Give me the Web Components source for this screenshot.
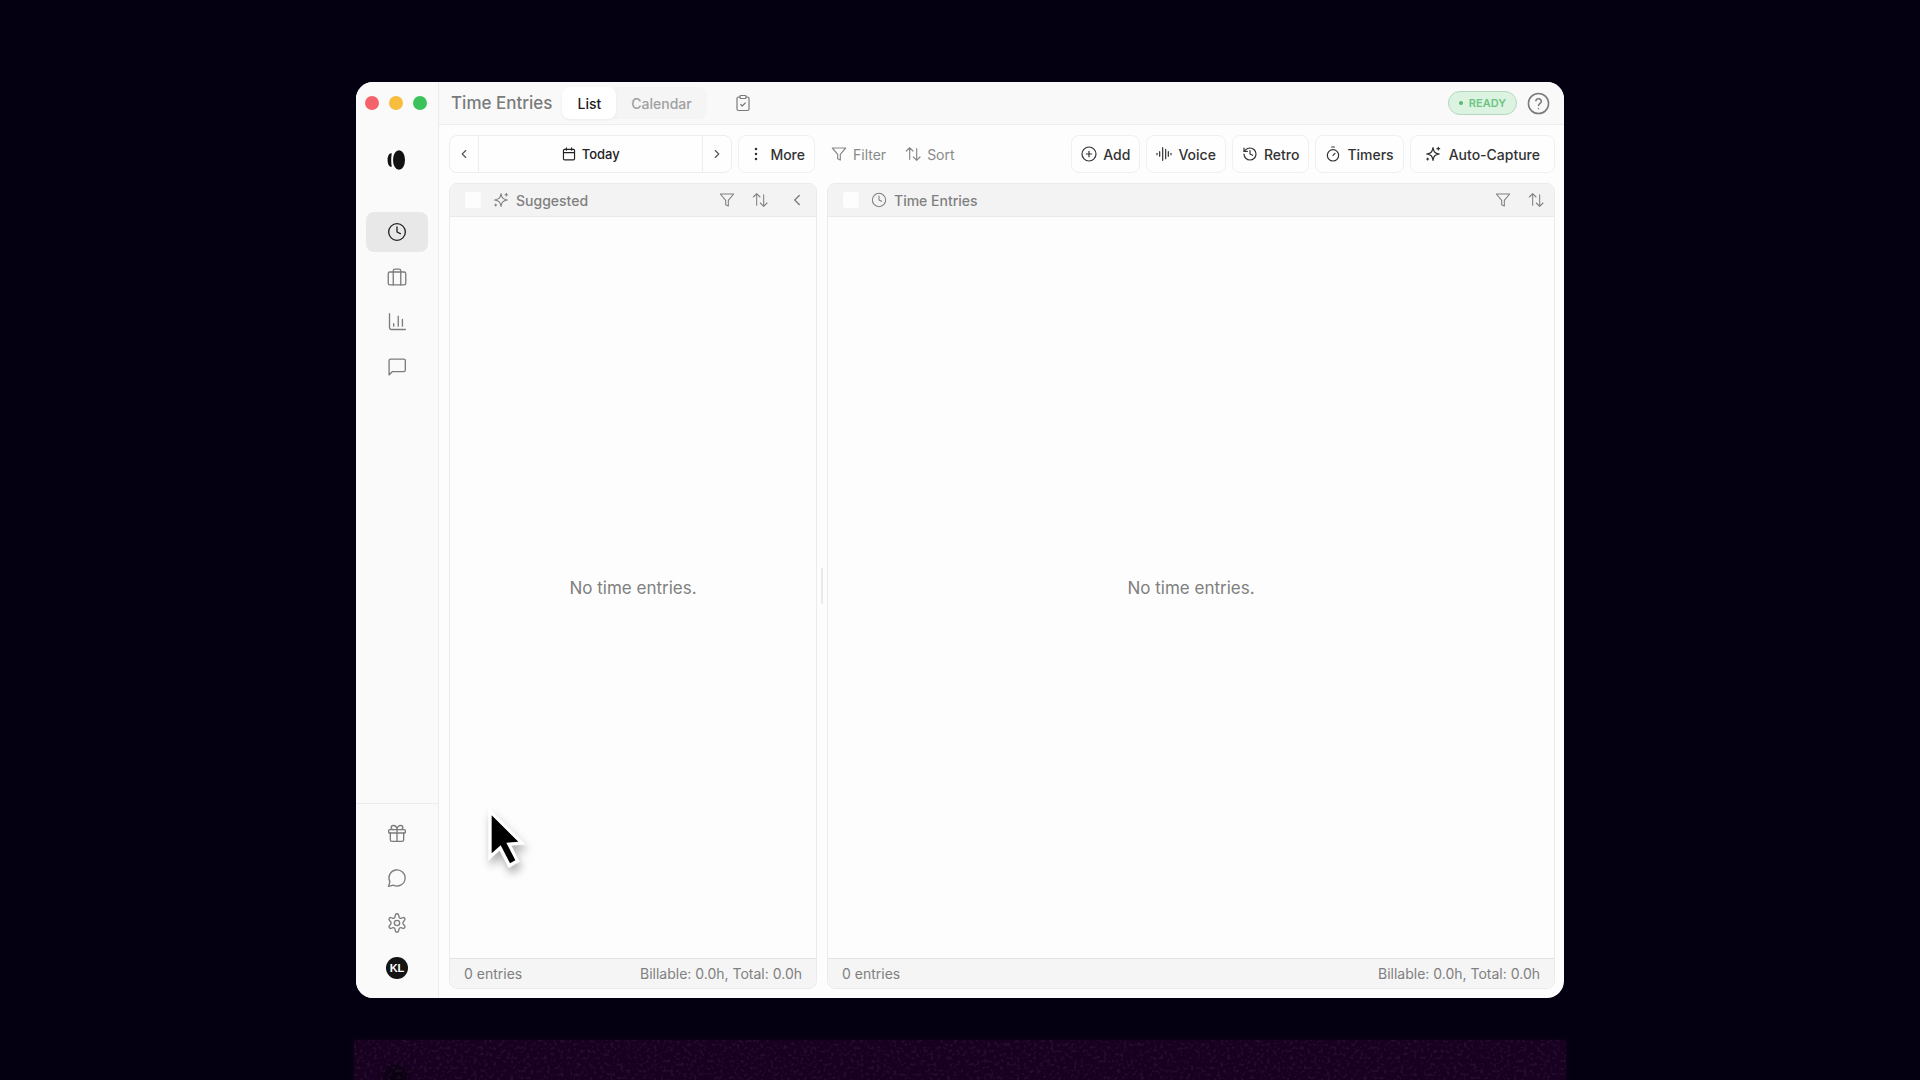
<!DOCTYPE html>
<html lang="en">
<head>
<meta charset="utf-8">
<title>Time Entries</title>
<style>
  body {
    margin: 0;
    background: #040012;
    font-family: Inter, "Liberation Sans", sans-serif;
    font-size: 14px;
    color: #2b2b2b;
  }
</style>
</head>
<body>
<desktop-stage>
  <app-window>
    <side-bar slot="sidebar"></side-bar>
    <title-bar slot="title" heading="Time Entries"></title-bar>
    <tool-bar slot="tools"></tool-bar>
    <entry-panel slot="left" icon="sparkles" heading="Suggested" collapsible></entry-panel>
    <entry-panel slot="right" icon="clock" heading="Time Entries"></entry-panel>
  </app-window>
</desktop-stage>

<script>
// lucide style outlines, all on a 24 grid
const ICONS = {
  clock: '<circle cx="12" cy="12" r="10"/><path d="M12 6v6l4 2"/>',
  luggage: '<rect x="1.5" y="6" width="21" height="15.5" rx="2"/><path d="M7.5 21.5V4.500a2 2 0 0 1 2-2h5a2 2 0 0 1 2 2v17"/>',
  chart: '<path d="M3 2v17a2 2 0 0 0 2 2h17"/><path d="M8 17v-3M13.500 17V5M18.500 17V9"/>',
  message: '<path d="M22 15.500a2 2 0 0 1-2 2H6.500L2.500 21.500V4.500a2 2 0 0 1 2-2H20a2 2 0 0 1 2 2z"/>',
  gift: '<rect x="2" y="8" width="20" height="4" rx="1"/><path d="M12 8v14M20 12v8a2 2 0 0 1-2 2H6a2 2 0 0 1-2-2v-8"/><path d="M7.500 8a2.500 2.500 0 0 1 0-5C10 3 12 5 12 8c0-3 2-5 4.500-5a2.500 2.500 0 0 1 0 5"/>',
  chat: '<path d="M7.500 20.500A9.700 9.700 0 1 0 3.500 16.500L1.800 22z"/>',
  gear: '<path d="M10 2.900a2 2 0 0 1 4 0l.3 1.200a2.300 2.300 0 0 0 3.400 2l1-.4a2 2 0 0 1 2.200 3.300l-.8.9a2.700 2.700 0 0 0 0 4.200l.8.9a2 2 0 0 1-2.200 3.300l-1-.4a2.300 2.300 0 0 0-3.400 2l-.3 1.200a2 2 0 0 1-4 0l-.3-1.200a2.300 2.300 0 0 0-3.400-2l-1 .4A2 2 0 0 1 3.100 15l.8-.9a2.700 2.700 0 0 0 0-4.200L3.100 9a2 2 0 0 1 2.200-3.300l1 .4a2.300 2.300 0 0 0 3.400-2z"/><circle cx="12" cy="12" r="3.200"/>',
  clipboard: '<rect x="8" y="2" width="8" height="4" rx="1"/><path d="M16 4h2a2 2 0 0 1 2 2v14a2 2 0 0 1-2 2H6a2 2 0 0 1-2-2V6a2 2 0 0 1 2-2h2"/><path d="m9 14 2 2 4-4"/>',
  help: '<circle cx="12" cy="12" r="10.500"/><path d="M9.200 9a3 3 0 0 1 5.800 1c0 2-3 2.300-3 4"/><path d="M12 17.300h.01"/>',
  left: '<path d="m15 18-6-6 6-6"/>',
  right: '<path d="m9 18 6-6-6-6"/>',
  calendar: '<path d="M7.500 1.500v4M16.500 1.500v4M2.500 9.500h19"/><rect x="2.500" y="4" width="19" height="18" rx="2"/>',
  dots: '<g fill="currentColor"><circle cx="12" cy="4.500" r="1"/><circle cx="12" cy="12" r="1"/><circle cx="12" cy="19.500" r="1"/></g>',
  funnel: '<path d="M22 3H2l8 9.500V19l4 2v-8.500z"/>',
  sort: '<path d="m2 7.500 5-5 5 5M7 2.500V20M22.500 16.500l-5 5-5-5M17.500 21.500V4"/>',
  plus: '<circle cx="12" cy="12" r="10.500"/><path d="M8 12h8M12 8v8"/>',
  wave: '<path d="M1.500 11v2M5.500 8.500v7M10 2.500v19M14.500 5v14M18.500 8.500v7M22.500 11v2"/>',
  history: '<path d="M3 12a9 9 0 1 0 9-9 9.750 9.750 0 0 0-6.740 2.740L3 8"/><path d="M3 3v5h5M12 7v5l4 2"/>',
  timer: '<path d="M10 1.500h4M12 14l3-3"/><circle cx="12" cy="14" r="8.500"/>',
  sparkles: '<path d="M12 2.500c1.200 6.800 2.700 8.300 9.500 9.500-6.800 1.200-8.300 2.700-9.500 9.500-1.200-6.800-2.700-8.300-9.500-9.500 6.800-1.200 8.300-2.700 9.500-9.500z"/><path d="M20 2v4M18 4h4M4 18v3M2.500 19.500h3"/>'
};

// small helper so each element only states its markup
class BaseElement extends HTMLElement {
  constructor() {
    super();
    this.attachShadow({ mode: 'open' });
  }

  connectedCallback() {
    this.shadowRoot.innerHTML = this.render();
  }
}

class UiIcon extends BaseElement {
  render() {
    return `
      <style>
        :host { display: inline-flex; flex: none; width: var(--icon-size, 16px); height: var(--icon-size, 16px); }
        svg { width: 100%; height: 100%; fill: none; stroke: currentColor; stroke-width: var(--icon-stroke, 2); stroke-linecap: round; stroke-linejoin: round; }
      </style>
      <svg viewBox="0 0 24 24" aria-hidden="true">${ICONS[this.getAttribute('name')]}</svg>
    `;
  }
}
customElements.define('ui-icon', UiIcon);

class DesktopStage extends BaseElement {
  render() {
    return `
      <style>
        :host { display: flex; flex-direction: column; box-sizing: border-box; height: 100vh; padding: 82px 356px 0; gap: 42px; overflow: hidden; }
        ::slotted(app-window) { flex: 1; }
        .glow { height: 40px; margin: 0 -2px; background: radial-gradient(circle at 42px 38px, #0b0012 6px, transparent 18px), #180020; box-shadow: 0 0 5px 1px #130019; }
        svg { display: block; width: 100%; height: 100%; opacity: 0.08; }
      </style>
      <slot></slot>
      <div class="glow">
        <svg aria-hidden="true">
          <filter id="grain">
            <feTurbulence type="fractalNoise" baseFrequency="0.3" numOctaves="2" seed="4"/>
            <feColorMatrix values="0 0 0 0 0.5  0 0 0 0 0.45  0 0 0 0 0.5  0 5 0 0 -2.600"/>
          </filter>
          <rect width="100%" height="100%" filter="url(#grain)"/>
        </svg>
      </div>
    `;
  }
}
customElements.define('desktop-stage', DesktopStage);

class AppWindow extends BaseElement {
  render() {
    return `
      <style>
        :host { display: flex; position: relative; min-width: 0; border-radius: 17px; background: #fdfdfd; overflow: hidden; --split: minmax(0, 368fr) minmax(0, 728fr); }
        .main { flex: 1; display: flex; flex-direction: column; min-width: 0; }
        .content { flex: 1; display: flex; flex-direction: column; gap: 10px; padding: 10px 9px 9px 10px; }
        .panels { flex: 1; display: grid; grid-template-columns: var(--split); gap: 10px; }
        .pane { display: grid; position: relative; }
        .handle { position: absolute; right: -6px; top: 50%; width: 2px; height: 36px; margin-top: -18px; border-radius: 1px; background: #e9e9e9; }
        .cursor { position: absolute; left: 130px; top: 724px; width: 44px; height: 70px; overflow: visible; filter: drop-shadow(2px 6px 4px rgba(0, 0, 0, 0.3)); }
      </style>
      <slot name="sidebar"></slot>
      <div class="main">
        <slot name="title"></slot>
        <div class="content">
          <slot name="tools"></slot>
          <div class="panels">
            <div class="pane"><slot name="left"></slot><span class="handle"></span></div>
            <div class="pane"><slot name="right"></slot></div>
          </div>
        </div>
      </div>
      <svg class="cursor" viewBox="0 0 132 210" aria-hidden="true">
        <path d="M17 28V142L44 118L72 172L88 163L61 110L97 107Z" fill="#000" stroke="#fff" stroke-width="20" stroke-miterlimit="4" paint-order="stroke"/>
      </svg>
    `;
  }
}
customElements.define('app-window', AppWindow);

class SideItem extends BaseElement {
  render() {
    return `
      <style>
        :host { display: block; }
        button { display: flex; align-items: center; justify-content: center; width: 100%; height: 40px; padding: 0; border: 0; border-radius: 8px; background: none; color: #7c7c7c; --icon-size: 20px; --icon-stroke: 1.6; }
        :host([active]) button { background: #e8e8e8; color: #222; }
      </style>
      <button type="button" aria-label="${this.getAttribute('label')}"><slot><ui-icon name="${this.getAttribute('icon')}"></ui-icon></slot></button>
    `;
  }
}
customElements.define('side-item', SideItem);

class SideBar extends BaseElement {
  render() {
    return `
      <style>
        :host { display: flex; flex-direction: column; box-sizing: border-box; width: 83px; flex: none; background: #fafafa; border-right: 1px solid #ececec; }
        .lights { display: flex; gap: 10px; padding: 14px 9px; }
        .lights i { width: 14px; height: 14px; border-radius: 50%; background: #f5636a; }
        .lights i:nth-child(2) { background: #f6bd3f; }
        .lights i:nth-child(3) { background: #3bc25b; }
        .logo { display: block; width: 18px; height: 20px; margin: 26px 0 42px 31px; }
        nav { display: flex; flex-direction: column; gap: 5px; padding: 0 10px; }
        .bottom { margin-top: auto; padding-top: 9px; padding-bottom: 10px; border-top: 1px solid #ececec; }
        .avatar { display: grid; place-items: center; width: 22px; height: 22px; border-radius: 50%; background: #141414; color: #fff; font-size: 11px; font-weight: 600; }
      </style>
      <div class="lights"><i></i><i></i><i></i></div>
      <svg class="logo" viewBox="0 0 18 20" aria-hidden="true">
        <ellipse cx="12" cy="10" rx="6" ry="9.800" fill="#111"/>
        <path d="M4.800 3.200C1.800 2.800.6 6.500.6 10s1.200 7.200 4.200 6.800C4 13 4 7 4.800 3.200z" fill="#111"/>
      </svg>
      <nav>
        <side-item icon="clock" label="Time" active></side-item>
        <side-item icon="luggage" label="Projects"></side-item>
        <side-item icon="chart" label="Reports"></side-item>
        <side-item icon="message" label="Messages"></side-item>
      </nav>
      <nav class="bottom">
        <side-item icon="gift" label="Rewards"></side-item>
        <side-item icon="chat" label="Support"></side-item>
        <side-item icon="gear" label="Settings"></side-item>
        <side-item label="Account"><span class="avatar">KL</span></side-item>
      </nav>
    `;
  }
}
customElements.define('side-bar', SideBar);

class TitleBar extends BaseElement {
  render() {
    return `
      <style>
        :host { display: flex; align-items: center; box-sizing: border-box; height: 43px; padding: 0 14px 0 12px; background: #f9f9f9; border-bottom: 1px solid #ededed; color: #7a7a7a; }
        h1 { margin: 0 10px 0 0; font-size: 17px; font-weight: 500; }
        button { font: inherit; color: inherit; border: 0; background: none; padding: 0; }
        .tabs { display: flex; border-radius: 8px; background: #f5f5f5; }
        .tabs button { height: 32px; padding: 0 15px; border-radius: 8px; font-weight: 500; color: #a0a0a0; }
        .tabs .on { background: #fff; color: #1c1c1c; box-shadow: 0 1px 3px rgba(0, 0, 0, 0.06); }
        .icon { display: flex; }
        .clip { margin-left: 27px; --icon-size: 18px; --icon-stroke: 1.6; }
        .ready { margin: 0 10px 0 auto; padding: 0 10px; border: 1px solid #b5d8bc; border-radius: 12px; background: #dcf3e1; color: #6cc583; font-size: 11px; font-weight: 600; line-height: 22px; display: flex; align-items: center; gap: 6px; }
        .ready i { width: 4px; height: 4px; border-radius: 50%; background: #5cb874; }
        .help { --icon-size: 23px; --icon-stroke: 1.6; }
      </style>
      <h1>${this.getAttribute('heading')}</h1>
      <div class="tabs">
        <button type="button" class="on">List</button>
        <button type="button">Calendar</button>
      </div>
      <button type="button" class="icon clip" aria-label="Tasks"><ui-icon name="clipboard"></ui-icon></button>
      <span class="ready"><i></i>READY</span>
      <button type="button" class="icon help" aria-label="Help"><ui-icon name="help"></ui-icon></button>
    `;
  }
}
customElements.define('title-bar', TitleBar);

class ToolButton extends BaseElement {
  render() {
    return `
      <style>
        :host { display: block; }
        button { display: flex; align-items: center; box-sizing: border-box; height: 38px; gap: 6px; padding: 0 9px; border: 1px solid #f0f0f0; border-radius: 8px; background: #fefefe; color: #333; font: inherit; font-weight: 500; white-space: nowrap; --icon-stroke: 1.8; }
        :host([wide]) button { gap: 8px; padding: 0 14px; }
        :host([plain]) button { border-color: transparent; background: none; color: #8a8a8a; font-weight: 400; padding: 0 8px 0 3px; }
      </style>
      <button type="button"><ui-icon name="${this.getAttribute('icon')}"></ui-icon><slot></slot></button>
    `;
  }
}
customElements.define('tool-button', ToolButton);

class DateStepper extends BaseElement {
  render() {
    return `
      <style>
        :host { display: flex; box-sizing: border-box; height: 38px; border: 1px solid #ededed; border-radius: 8px; background: #fefefe; overflow: hidden; }
        button { display: flex; align-items: center; justify-content: center; gap: 6px; width: 28px; padding: 0; border: 0; background: none; color: #555; font: inherit; --icon-size: 14px; }
        .day { flex: 1; border: solid #ededed; border-width: 0 1px; color: #222; font-size: 13px; font-weight: 500; }
      </style>
      <button type="button" aria-label="Previous day"><ui-icon name="left"></ui-icon></button>
      <button type="button" class="day"><ui-icon name="calendar"></ui-icon>Today</button>
      <button type="button" aria-label="Next day"><ui-icon name="right"></ui-icon></button>
    `;
  }
}
customElements.define('date-stepper', DateStepper);

class ToolBar extends BaseElement {
  render() {
    return `
      <style>
        :host { display: grid; grid-template-columns: var(--split); gap: 10px; }
        .group { display: flex; gap: 6px; }
        .dates { padding-right: 2px; }
        date-stepper { flex: 1; }
        .push { margin-left: auto; }
      </style>
      <div class="group dates">
        <date-stepper></date-stepper>
        <tool-button icon="dots">More</tool-button>
      </div>
      <div class="group">
        <tool-button plain icon="funnel">Filter</tool-button>
        <tool-button plain icon="sort">Sort</tool-button>
        <tool-button class="push" icon="plus">Add</tool-button>
        <tool-button icon="wave">Voice</tool-button>
        <tool-button icon="history">Retro</tool-button>
        <tool-button icon="timer">Timers</tool-button>
        <tool-button wide icon="sparkles">Auto-Capture</tool-button>
      </div>
    `;
  }
}
customElements.define('tool-bar', ToolBar);

class EntryPanel extends BaseElement {
  render() {
    const collapse = this.hasAttribute('collapsible')
      ? '<button type="button" class="collapse" aria-label="Collapse"><ui-icon name="left"></ui-icon></button>'
      : '';
    return `
      <style>
        :host { display: flex; flex-direction: column; border: 1px solid #ebebeb; border-radius: 8px; overflow: hidden; color: #808080; --icon-stroke: 1.6; }
        header, footer { display: flex; align-items: center; background: #f3f3f3; }
        header { height: 32px; padding: 0 10px 0 15px; border-bottom: 1px solid #e9e9e9; }
        input { appearance: none; width: 16px; height: 16px; margin: 0 12px 0 0; border-radius: 3px; background: #fdfdfd; }
        h2 { flex: 1; margin: 0 0 0 7px; font-size: 14px; font-weight: 500; }
        button { display: flex; margin-left: 17px; padding: 0; border: 0; background: none; color: inherit; }
        .collapse { margin-left: 20px; --icon-size: 18px; --icon-stroke: 2; }
        p { flex: 1; display: grid; place-items: center; margin: 0; font-size: 17px; }
        footer { justify-content: space-between; height: 29px; padding: 0 14px; border-top: 1px solid #e4e4e4; background: #f5f5f5; }
      </style>
      <header>
        <input type="checkbox" aria-label="Select all">
        <ui-icon name="${this.getAttribute('icon')}"></ui-icon>
        <h2>${this.getAttribute('heading')}</h2>
        <button type="button" aria-label="Filter"><ui-icon name="funnel"></ui-icon></button>
        <button type="button" aria-label="Sort"><ui-icon name="sort"></ui-icon></button>
        ${collapse}
      </header>
      <p>No time entries.</p>
      <footer><span>0 entries</span><span>Billable: 0.0h, Total: 0.0h</span></footer>
    `;
  }
}
customElements.define('entry-panel', EntryPanel);
</script>
</body>
</html>
